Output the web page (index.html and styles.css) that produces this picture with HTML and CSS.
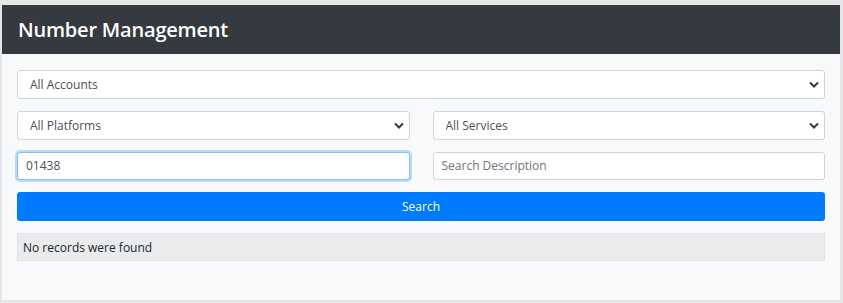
FILE: index.html
```html
<!DOCTYPE html>
<html lang="en">
<head>
    <meta charset="UTF-8">
    <meta name="viewport" content="width=device-width, initial-scale=1.0">
    <title>Number Management</title>
    <link rel="stylesheet" href="styles.css">
</head>
<body>
    <div class="card">
        <div class="card-header">
            <h1>Number Management</h1>
        </div>
        <div class="card-body">
            <div class="select-wrap">
                <select class="form-control">
                    <option>All Accounts</option>
                </select>
                <svg class="chevron" viewBox="0 0 10 6"><path d="M1 1l4 4 4-4" /></svg>
            </div>
            <div class="form-row">
                <div class="select-wrap">
                    <select class="form-control">
                        <option>All Platforms</option>
                    </select>
                    <svg class="chevron" viewBox="0 0 10 6"><path d="M1 1l4 4 4-4" /></svg>
                </div>
                <div class="select-wrap">
                    <select class="form-control">
                        <option>All Services</option>
                    </select>
                    <svg class="chevron" viewBox="0 0 10 6"><path d="M1 1l4 4 4-4" /></svg>
                </div>
            </div>
            <div class="form-row">
                <input class="form-control focused" type="text" value="01438">
                <input class="form-control" type="text" placeholder="Search Description">
            </div>
            <button class="btn-search" type="button">Search</button>
            <div class="no-records">No records were found</div>
        </div>
    </div>
</body>
</html>
```

FILE: styles.css
```css
body {
    font-family: "Open Sans", "Noto Sans", sans-serif;
    background-color: #e6e6e6;
    margin: 0;
    padding: 5px 3px 3px 2px;
}

.card {
    background: #f8f9fa;
    height: 295px;
    box-sizing: border-box;
}

.card-header {
    background: #343a40;
    height: 49px;
    padding: 0 16px;
    display: flex;
    align-items: center;
}

h1 {
    margin: 0;
    color: #fff;
    font-size: 20px;
    font-weight: 600;
    letter-spacing: -0.2px;
}

.card-body {
    padding: 16px 15px;
    display: flex;
    flex-direction: column;
    gap: 12px;
}

.form-row {
    display: grid;
    grid-template-columns: 1fr 1fr;
    gap: 23px;
}

.select-wrap {
    position: relative;
}

.form-control {
    display: block;
    width: 100%;
    box-sizing: border-box;
    height: 28.75px;
    margin: 0;
    padding: 4px 8px;
    font-family: inherit;
    font-size: 12px;
    color: #495057;
    background: #fff;
    border: 1px solid #ced4da;
    border-radius: 3px;
    outline: none;
}

select.form-control {
    appearance: none;
    -webkit-appearance: none;
    padding-left: 12px;
}

.form-control::placeholder {
    color: #6c757d;
}

.form-control.focused {
    border-color: #80bdff;
    box-shadow: 0 0 0 2px rgba(0, 123, 255, 0.25);
}

.chevron {
    position: absolute;
    right: 6px;
    top: 11px;
    width: 10px;
    height: 7px;
    pointer-events: none;
}

.chevron path {
    fill: none;
    stroke: #343a40;
    stroke-width: 2;
}

.btn-search {
    height: 28.75px;
    border: none;
    border-radius: 3px;
    background: #007bff;
    color: #fff;
    font-family: inherit;
    font-size: 12px;
}

.no-records {
    height: 28px;
    box-sizing: border-box;
    padding: 0 5px;
    display: flex;
    align-items: center;
    background: #e9ebed;
    border: 1px solid #dfe1e4;
    color: #212529;
    font-size: 12px;
}
```
